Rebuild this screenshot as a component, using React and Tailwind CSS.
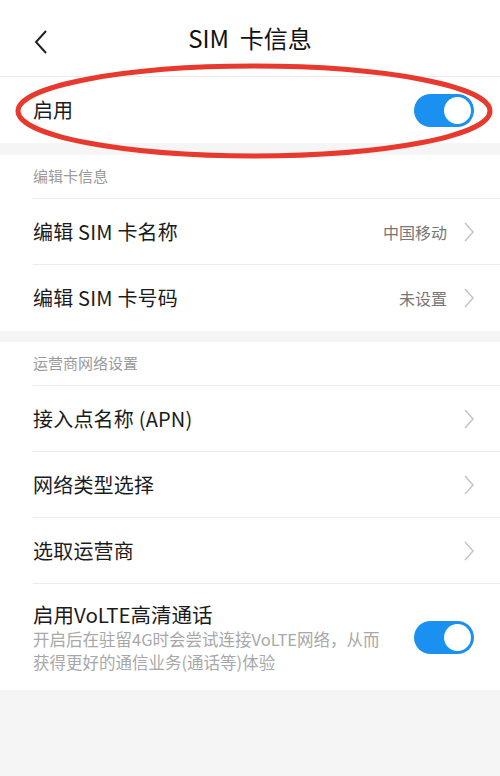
import React from 'react';

const FONT = { fontFamily: '"Noto Sans CJK SC", "Noto Sans", sans-serif' };

function Chevron() {
  return (
    <svg width="12" height="22" viewBox="0 0 12 22" className="ml-4 shrink-0">
      <path d="M2 2 L10 11 L2 20" fill="none" stroke="#c4c4c4" strokeWidth="1.5" />
    </svg>
  );
}

function Toggle() {
  return (
    <div className="w-[60px] h-[33px] rounded-full bg-[#1a90f0] flex items-center justify-end pr-[3px] shrink-0">
      <div className="w-[27px] h-[27px] rounded-full bg-white" />
    </div>
  );
}

function Row({ label, value, last }) {
  return (
    <div className={`h-[66px] flex items-center pr-[25px] ${last ? '' : 'border-b border-[#ececec]'}`}>
      <span className="flex-1 text-[20px] tracking-[0.2px] text-[#1b1b1b]">{label}</span>
      {value && <span className="text-[16px] text-[#777]">{value}</span>}
      <Chevron />
    </div>
  );
}

function SectionHead({ title }) {
  return (
    <div className="h-[44px] flex items-center border-b border-[#ececec] text-[15px] text-[#9a9a9a]">
      {title}
    </div>
  );
}

export default function App() {
  return (
    <div className="relative w-[500px] h-[776px] bg-[#f5f5f5] overflow-hidden" style={FONT}>
      <div className="bg-white h-[77px] flex items-center relative border-b border-[#ececec]">
        <svg width="14" height="24" viewBox="0 0 14 24" className="absolute left-[34px] top-[30px]">
          <path d="M12 1 L2 12 L12 23" fill="none" stroke="#222" strokeWidth="2" />
        </svg>
        <div className="w-full text-center text-[24px] text-[#111]">SIM&nbsp; 卡信息</div>
      </div>

      <div className="bg-white h-[66px] flex items-center pl-[33px] pr-[26px]">
        <span className="flex-1 text-[20px] text-[#1b1b1b]">启用</span>
        <Toggle />
      </div>

      <div className="h-[12px]" />

      <div className="bg-white pl-[33px]">
        <SectionHead title="编辑卡信息" />
        <Row label="编辑 SIM 卡名称" value="中国移动" />
        <Row label="编辑 SIM 卡号码" value="未设置" last />
      </div>

      <div className="h-[11px]" />

      <div className="bg-white pl-[33px]">
        <SectionHead title="运营商网络设置" />
        <Row label="接入点名称 (APN)" />
        <Row label="网络类型选择" />
        <Row label="选取运营商" />
        <div className="h-[106px] flex items-center pr-[26px]">
          <div className="flex-1">
            <div className="text-[20.5px] text-[#1b1b1b] leading-[28px]">启用VoLTE高清通话</div>
            <div className="w-[358px] text-[16.5px] text-[#a8a8a8] leading-[23px]">
              开启后在驻留4G时会尝试连接VoLTE网络，从而获得更好的通信业务(通话等)体验
            </div>
          </div>
          <Toggle />
        </div>
      </div>

      <svg width="500" height="776" className="absolute left-0 top-0 pointer-events-none">
        <ellipse cx="254" cy="111" rx="236" ry="45" fill="none" stroke="#e8392e" strokeWidth="5" />
      </svg>
    </div>
  );
}
